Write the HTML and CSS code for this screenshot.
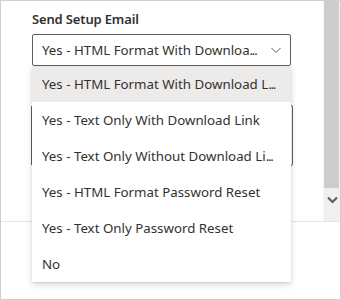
FILE: index.html
```html
<!DOCTYPE html>
<html lang="en">
<head>
  <meta charset="UTF-8">
  <title>Send Setup Email</title>
  <link rel="stylesheet" href="styles.css">
</head>
<body>
  <div class="frame">
    <div class="panel">
      <div class="panel-content">
        <label class="field-label">Send Setup Email</label>
        <div class="dropdown open">
          <div class="dropdown-title">
            <span class="dropdown-text" title="Yes - HTML Format With Download Link">Yes - HTML Format With Downloa<span class="dots">...</span></span>
            <svg class="dropdown-caret" width="12" height="12" viewBox="0 0 12 12">
              <path d="M1.5 4 L6 8.5 L10.5 4" fill="none" stroke="#605e5c" stroke-width="1"/>
            </svg>
          </div>
          <ul class="dropdown-list">
            <li class="dropdown-item selected" title="Yes - HTML Format With Download Link">Yes - HTML Format With Download L<span class="dots">...</span></li>
            <li class="dropdown-item">Yes - Text Only With Download Link</li>
            <li class="dropdown-item" title="Yes - Text Only Without Download Link">Yes - Text Only Without Download Li<span class="dots">...</span></li>
            <li class="dropdown-item">Yes - HTML Format Password Reset</li>
            <li class="dropdown-item">Yes - Text Only Password Reset</li>
            <li class="dropdown-item">No</li>
          </ul>
        </div>
        <div class="notes-box"></div>
      </div>
      <div class="scrollbar">
        <div class="scroll-thumb"></div>
        <div class="scroll-track">
          <svg class="scroll-arrow" width="11" height="8" viewBox="0 0 11 8">
            <path d="M1 1.5 L5.5 6 L10 1.5" fill="none" stroke="#606060" stroke-width="2.2"/>
          </svg>
        </div>
      </div>
    </div>
    <div class="footer"></div>
  </div>
</body>
</html>
```

FILE: styles.css
```css
* {
  margin: 0;
  padding: 0;
  box-sizing: border-box;
}

body {
  font-family: 'Noto Sans', 'Open Sans', sans-serif;
  font-size: 13.3px;
  color: #323130;
  background: #fff;
}

.frame {
  width: 341px;
  height: 300px;
  border: 1px solid #cfcfcf;
  display: flex;
  flex-direction: column;
  overflow: hidden;
}

.panel {
  height: 221px;
  display: flex;
  border-bottom: 1px solid #e6e6e6;
}

.panel-content {
  flex: 1;
  min-width: 0;
  padding: 3px 32px 0 31px;
}

.field-label {
  display: block;
  padding: 5px 0;
  line-height: 20px;
  font-weight: 600;
  font-size: 13px;
  letter-spacing: -0.15px;
}

.dropdown {
  position: relative;
}

.dropdown-title {
  height: 32px;
  border: 1px solid #605e5c;
  border-radius: 2px;
  display: flex;
  align-items: center;
  padding: 0 8px 0 9px;
  gap: 10px;
}

.dropdown-text {
  flex: 1;
  min-width: 0;
  white-space: nowrap;
}

.dots {
  letter-spacing: -1.3px;
}

.dropdown-caret {
  flex: none;
}

.dropdown-list {
  list-style: none;
  position: absolute;
  top: 100%;
  left: 0;
  right: 0;
  background: #fff;
  box-shadow: 0 3.2px 7.2px rgba(0, 0, 0, 0.132), 0 0.6px 1.8px rgba(0, 0, 0, 0.108);
  z-index: 10;
}

.dropdown-item {
  height: 36px;
  line-height: 36px;
  padding: 0 10px;
  white-space: nowrap;
}

.dropdown-item.selected {
  background: #edebe9;
}

.notes-box {
  margin: 39px -2px 0 -1px;
  height: 61px;
  border: 1px solid #605e5c;
  border-radius: 2px;
}

.scrollbar {
  width: 17px;
  flex: none;
  display: flex;
  flex-direction: column;
  background: #f0f0f0;
  border-left: 1px solid #f6f6f6;
}

.scroll-thumb {
  height: 187px;
  background: #cdcdcd;
  margin-right: 1px;
}

.scroll-track {
  flex: 1;
  display: flex;
  justify-content: center;
  padding-top: 8px;
}

.footer {
  flex: 1;
}
```
